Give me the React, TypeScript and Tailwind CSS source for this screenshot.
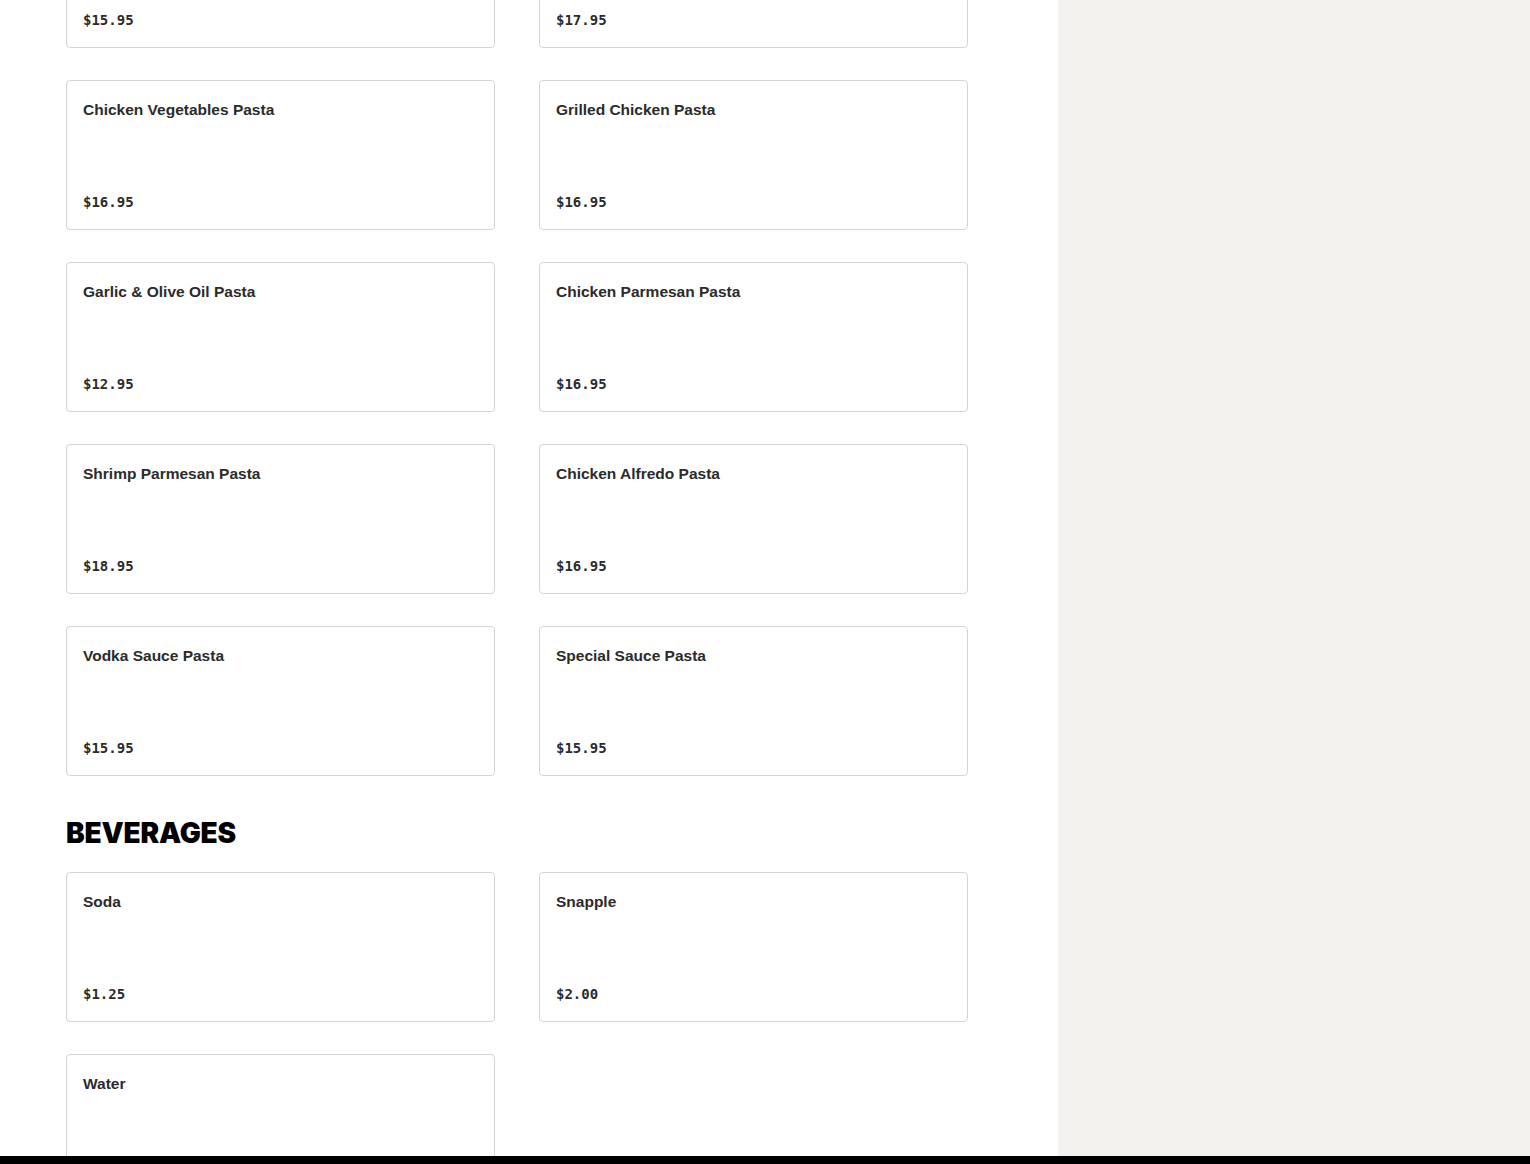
import React from "react";

type Item = { name: string; price: string };

const firstRow: Item[] = [
  { name: "Shrimp Pasta", price: "$15.95" },
  { name: "Salmon Pasta", price: "$17.95" },
];

const pasta: Item[] = [
  { name: "Chicken Vegetables Pasta", price: "$16.95" },
  { name: "Grilled Chicken Pasta", price: "$16.95" },
  { name: "Garlic & Olive Oil Pasta", price: "$12.95" },
  { name: "Chicken Parmesan Pasta", price: "$16.95" },
  { name: "Shrimp Parmesan Pasta", price: "$18.95" },
  { name: "Chicken Alfredo Pasta", price: "$16.95" },
  { name: "Vodka Sauce Pasta", price: "$15.95" },
  { name: "Special Sauce Pasta", price: "$15.95" },
];

const beverages: Item[] = [
  { name: "Soda", price: "$1.25" },
  { name: "Snapple", price: "$2.00" },
  { name: "Water", price: "$1.00" },
];

function Card({ item }: { item: Item }) {
  return (
    <div className="flex h-[150px] flex-col justify-between rounded-[4px] border border-[#d4d4d4] bg-white px-4 pt-[17px] pb-[17px]">
      <div
        className="text-[15.5px] font-semibold leading-6 text-[#2b2b2b]"
        style={{ fontFamily: '"Liberation Sans", Arial, sans-serif' }}
      >
        {item.name}
      </div>
      <div
        className="text-[14px] font-bold leading-5 text-[#2b2b2b]"
        style={{ fontFamily: '"DejaVu Sans Mono", "Liberation Mono", monospace' }}
      >
        {item.price}
      </div>
    </div>
  );
}

export default function App() {
  return (
    <div className="flex h-[1164px] w-[1530px] flex-col overflow-hidden bg-white">
      <div className="flex h-[1156px] overflow-hidden">
        <div className="w-[1058px] overflow-hidden bg-white pl-[66px]">
          <div className="-mt-[102px] w-[902px]">
            <div className="grid grid-cols-2 gap-x-[44px] gap-y-[32px]">
              {firstRow.concat(pasta).map((it, i) => (
                <Card key={i} item={it} />
              ))}
            </div>
            <h2
              className="mt-[39px] mb-[21px] text-[28px] font-black leading-[36px] tracking-[-0.2px] text-black"
              style={{ fontFamily: 'Inter, "Liberation Sans", sans-serif' }}
            >
              BEVERAGES
            </h2>
            <div className="grid grid-cols-2 gap-x-[44px] gap-y-[32px]">
              {beverages.map((it, i) => (
                <Card key={i} item={it} />
              ))}
            </div>
          </div>
        </div>
        <div className="flex-1 bg-[#f3f2ef]" />
      </div>
      <div className="h-2 w-full bg-black" />
    </div>
  );
}
